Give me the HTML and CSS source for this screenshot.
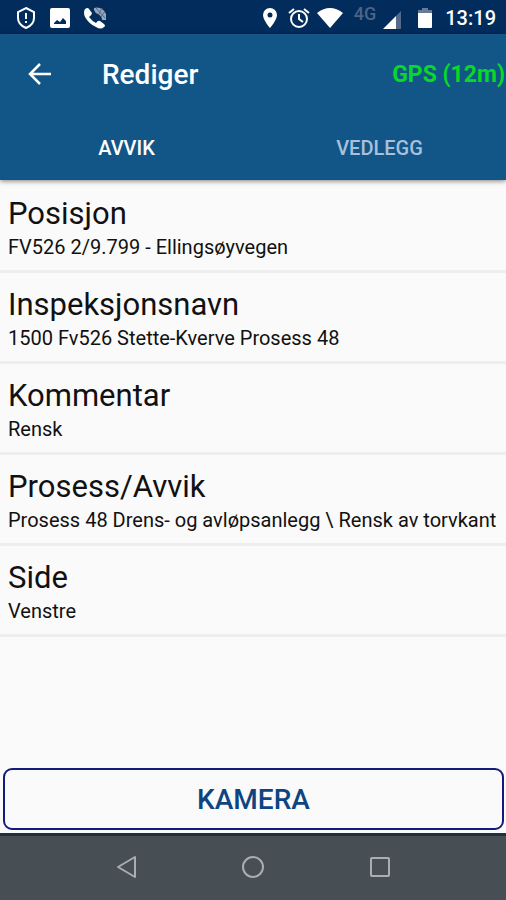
FILE: index.html
```html
<!DOCTYPE html>
<html lang="no">
<head>
<meta charset="utf-8">
<meta name="viewport" content="width=device-width, initial-scale=1">
<title>Rediger</title>
<link rel="stylesheet" href="styles.css">
</head>
<body>
<div class="status">
  <div class="status-left">
    <svg width="20" height="24" viewBox="0 0 20 24" fill="none" stroke="#fff" stroke-width="2"><path d="M10 2 18 6V12C18 17 15 20 10 22 5 20 2 17 2 12V6Z"/><path d="M10 7V13M10 15V17"/></svg>
    <svg width="20" height="20" viewBox="0 0 20 20"><path fill="#fff" fill-rule="evenodd" d="M2 0H18Q20 0 20 2V18Q20 20 18 20H2Q0 20 0 18V2Q0 0 2 0ZM4 16H16V13L13 10 10 14 7 12 4 15Z"/></svg>
    <svg width="22" height="24" viewBox="0 0 22 24"><path fill="#fff" d="M1 3Q4 1 5 3L8 7Q8 9 5 11 8 15 12 17 14 14 16 15L20 18Q22 20 20 21 17 24 12 21 5 18 1 11-1 6 1 3Z"/><path fill="#99a5b9" d="M10 2Q18 0 22 8V14H18Q18 10 14 8 11 7 10 4Z"/><path stroke="#53698c" stroke-width="1" d="M12 2 21 12M18 2 15 8M21 5 17 11"/></svg>
  </div>
  <div class="status-right">
    <svg width="14" height="20" viewBox="0 0 14 20"><path fill="#fff" fill-rule="evenodd" d="M7 0A7 7 0 0 1 14 7C14 12 7 20 7 20S0 12 0 7A7 7 0 0 1 7 0ZM7 4.500A2.500 2.500 0 1 0 7 9.500 2.500 2.500 0 1 0 7 4.500Z"/></svg>
    <svg class="alarm" width="22" height="22" viewBox="0 0 22 22" fill="none" stroke="#fff" stroke-width="2"><circle cx="11" cy="12" r="8"/><path d="M1 6 6 2M21 6 16 2M11 7V12L15 15"/></svg>
    <svg width="26" height="20" viewBox="0 0 26 20"><path fill="#fff" d="M0 5Q13-5 26 5L13 20Z"/></svg>
    <span class="network">4G</span>
    <svg class="signal" width="18" height="18" viewBox="0 0 18 18"><path fill="#fff" d="M0 18 13 5V18Z"/><path fill="#536a8a" d="M13 5 18 0V18H13Z"/></svg>
    <svg class="battery" width="14" height="20" viewBox="0 0 14 20"><path fill="#667b98" d="M4 0H10V2H14V5H0V2H4Z"/><path fill="#fff" d="M0 5H14V19Q14 20 13 20H1Q0 20 0 19Z"/></svg>
    <time class="time">13:19</time>
  </div>
</div>
<header class="header">
  <div class="bar">
    <button class="back" type="button" aria-label="Tilbake"><svg width="24" height="24" viewBox="0 0 24 24" fill="none" stroke="#fff" stroke-width="2.500"><path d="M12 2 2 12 12 22M2 12H23"/></svg></button>
    <h1 class="title">Rediger</h1>
    <span class="gps">GPS (12m)</span>
  </div>
  <nav class="tabs">
    <button class="tab active" type="button">AVVIK</button>
    <button class="tab" type="button">VEDLEGG</button>
  </nav>
</header>
<main class="content">
  <dl class="list">
    <div class="row"><dt>Posisjon</dt><dd>FV526 2/9.799 - Ellingsøyvegen</dd></div>
    <div class="row"><dt>Inspeksjonsnavn</dt><dd>1500 Fv526 Stette-Kverve Prosess 48</dd></div>
    <div class="row"><dt>Kommentar</dt><dd>Rensk</dd></div>
    <div class="row"><dt>Prosess/Avvik</dt><dd>Prosess 48 Drens- og avløpsanlegg \ Rensk av torvkant</dd></div>
    <div class="row"><dt>Side</dt><dd>Venstre</dd></div>
  </dl>
  <button class="camera" type="button">KAMERA</button>
</main>
<footer class="navbar">
  <button class="nav" type="button" aria-label="Tilbake"><svg width="22" height="24" viewBox="0 0 22 24" fill="none" stroke="#a9aeb0" stroke-width="2" stroke-linejoin="round"><path d="M3 12 20 2V22Z"/></svg></button>
  <button class="nav" type="button" aria-label="Hjem"><svg width="24" height="24" viewBox="0 0 24 24" fill="none" stroke="#a9aeb0" stroke-width="2"><circle cx="12" cy="12" r="10"/></svg></button>
  <button class="nav" type="button" aria-label="Oversikt"><svg width="22" height="22" viewBox="0 0 22 22" fill="none" stroke="#a9aeb0" stroke-width="2"><rect x="2" y="2" width="18" height="18" rx="1"/></svg></button>
</footer>
</body>
</html>
```
FILE: styles.css
```css
* { box-sizing: border-box; }

body {
  margin: 0;
  min-height: 100vh;
  display: flex;
  flex-direction: column;
  background: #fafafa;
  color: #111;
  font-family: Roboto, "Liberation Sans", sans-serif;
}

button {
  padding: 0;
  border: 0;
  background: none;
  font-family: inherit;
}

svg { display: block; flex: none; }

.status {
  height: 34px;
  padding: 1px 10px 0 16px;
  display: flex;
  justify-content: space-between;
  align-items: center;
  background: #022c5c;
  color: #fff;
}

.status-left,
.status-right {
  display: flex;
  align-items: center;
}

.status-left { gap: 14px; }
.status-right { gap: 7px; }
.alarm { margin-left: 4px; }

.network {
  margin: 0 0 8px 4px;
  color: #4b6486;
  font-size: 18px;
  font-weight: 500;
  line-height: 18px;
}

.signal { margin-top: 4px; }
.battery { margin: 0 6px 0 10px; }

.time {
  font-size: 20px;
  font-weight: 500;
}

.header {
  position: relative;
  background: #125688;
  color: #fff;
  box-shadow: 0 1px 5px rgba(0, 0, 0, 0.5);
}

.bar {
  height: 80px;
  padding-left: 28px;
  display: flex;
  align-items: center;
}

.back { width: 24px; }

.title {
  margin: 0 0 0 50px;
  flex: 1;
  font-size: 28px;
  font-weight: 500;
}

.gps {
  padding-right: 1px;
  color: #08d82a;
  font-size: 23px;
  font-weight: 700;
}

.tabs {
  height: 66px;
  display: grid;
  grid-template-columns: 1fr 1fr;
}

.tab {
  padding-top: 2px;
  color: #a8c0dc;
  font-size: 20px;
  font-weight: 500;
}

.tab.active { color: #fff; }

.content {
  flex: 1;
  display: flex;
  flex-direction: column;
  justify-content: space-between;
}

.list { margin: 0; padding-top: 2px; }

.row {
  padding: 14px 8px 10px;
  border-bottom: 3px solid #eeeeee;
}

dt {
  font-size: 31px;
  line-height: 36px;
}

dd {
  margin: 0;
  padding-top: 2px;
  font-size: 20px;
  line-height: 26px;
}

.camera {
  height: 62px;
  margin: 0 2px 3px 3px;
  border: 2px solid #151b78;
  border-radius: 9px;
  color: #0d4481;
  font-size: 28px;
  font-weight: 500;
}

.navbar {
  height: 67px;
  padding: 0 63px 2px;
  border-top: 3px solid #1c3337;
  display: grid;
  grid-template-columns: repeat(3, 1fr);
  background: #474e54;
}

.nav {
  display: flex;
  align-items: center;
  justify-content: center;
}
```
